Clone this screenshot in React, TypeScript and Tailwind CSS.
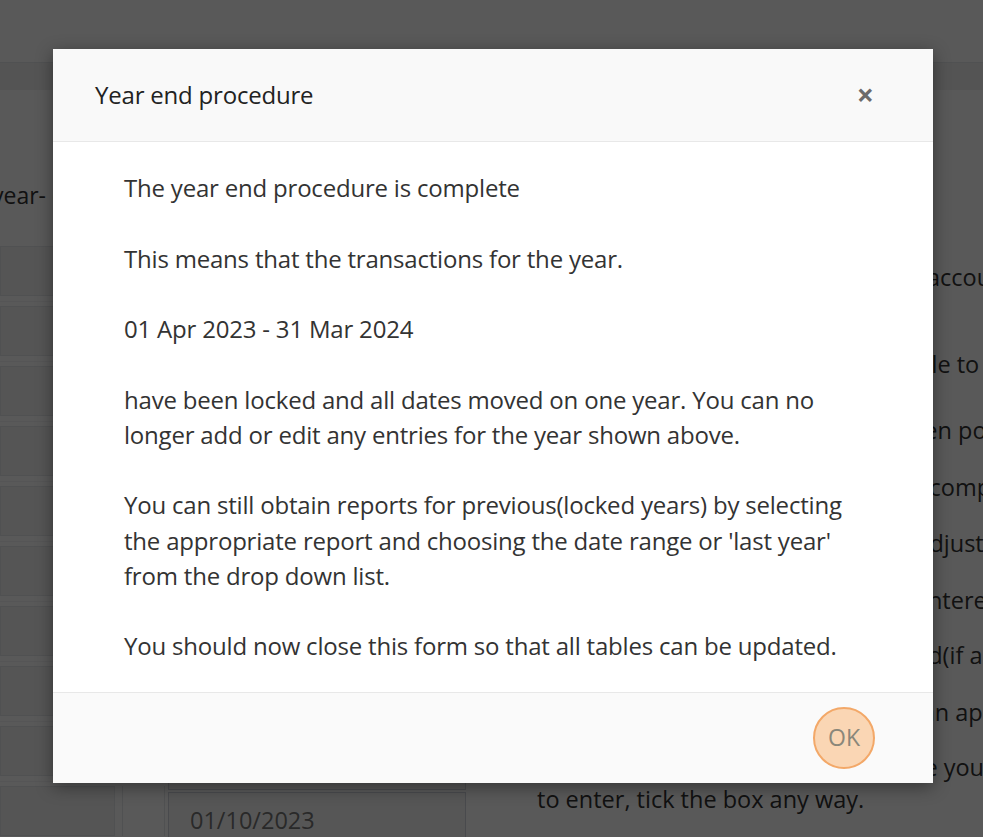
import React from "react";

const ROWS = ["01/04/2023", "01/05/2023", "01/06/2023", "01/07/2023", "01/08/2023", "01/09/2023", "01/10/2023", "01/11/2023", "01/12/2023", "01/10/2023"];

const CHECKS = [
  { text: "Run this procedure once all of your accounts are up to date", mt: "mt-[89px]" },
  { text: "Please check first that you will be able to complete every step", mt: "mt-[55px]" },
  { text: "All the bank accounts must have been posted and reconciled", mt: "mt-[34px]" },
  { text: "Ensure that any sales invoices were complete and sent", mt: "mt-[25px]" },
  { text: "Make sure the VAT return and any adjustments are entered", mt: "mt-[24px]" },
  { text: "All depreciation figures have been entered for the year", mt: "mt-[25px]" },
  { text: "Closing stock value has been entered(if any)", mt: "mt-[23px]" },
  { text: "Any dividend should be entered as an appropriate journal", mt: "mt-[25px]" },
];

function BackgroundPage() {
  return (
    <div className="h-[837px] bg-white text-[#333] font-['Open_Sans',sans-serif]">
      <div className="h-[63px] border-b border-gray-200 bg-white" />
      <div className="h-[27px] bg-[#f0f0f0]" />
      <div className="flex">
        {/* left form */}
        <div className="w-[520px] shrink-0 pt-[89px]">
          <div className="-ml-[8px] whitespace-nowrap text-[23px] leading-[32px]">year- end date</div>
          <div className="mt-[31px] flex flex-col">
            {ROWS.map((d, i) => (
              <div key={i} className="flex h-[60px] items-start border-b border-gray-100">
                <div className="mt-[4px] h-[50px] w-[115px] shrink-0 border border-gray-200 bg-[#f2f2f2]" />
                <div className="ml-[7px] mt-[4px] h-[50px] w-[43px] shrink-0 border-x border-gray-200" />
                <div className="ml-[3px] mt-[10px] flex h-[58px] w-[298px] shrink-0 items-center border border-gray-300 bg-[#f7f7f7] px-[21px] text-[23.5px] text-[#777]">
                  {d}
                </div>
              </div>
            ))}
          </div>
        </div>
        {/* right checklist */}
        <div className="flex-1 whitespace-nowrap pl-[17px] pt-[40px] text-[23.5px] leading-[32px]">
          <div className="flex gap-8">
            <div className="pb-[6px] text-gray-500">Checklist</div>
            <div className="w-[240px] border-b-4 border-[#dcc572] pb-[6px]">Before you start</div>
          </div>
          {CHECKS.map((c, i) => (
            <div key={i} className={c.mt}>{c.text}</div>
          ))}
          <div className="mt-[23px]">If any of these do not apply, because you have nothing</div>
          <div>to enter, tick the box any way.</div>
        </div>
      </div>
    </div>
  );
}

export default function App() {
  return (
    <div className="relative h-[837px] w-full overflow-hidden">
      <BackgroundPage />
      <div className="absolute inset-0 bg-black/65" />

      {/* modal */}
      <div className="absolute left-[53px] top-[49px] w-[880px] bg-white font-['Open_Sans',sans-serif] shadow-[0_4px_16px_rgba(0,0,0,0.4)]">
        <div className="flex h-[93px] items-center justify-between border-b border-[#e8e8e8] bg-[#f9f9f9] pl-[42px] pr-[59px]">
          <h2 className="text-[24px] leading-none tracking-[-0.2px] text-[#222]">Year end procedure</h2>
          <button className="text-[30px] font-bold leading-none text-[#6b6b6b]">×</button>
        </div>

        <div className="pb-[28px] pl-[71px] pr-[30px] pt-[28px] text-[24px] leading-[35.25px] tracking-[-0.2px] text-[#333]">
          <p>The year end procedure is complete</p>
          <p className="mt-[35.25px]">This means that the transactions for the year.</p>
          <p className="mt-[35.25px]">01 Apr 2023 - 31 Mar 2024</p>
          <p className="mt-[35.25px]">
            have been locked and all dates moved on one year. You can no
            <br />
            longer add or edit any entries for the year shown above.
          </p>
          <p className="mt-[35.25px]">
            You can still obtain reports for previous(locked years) by selecting
            <br />
            the appropriate report and choosing the date range or 'last year'
            <br />
            from the drop down list.
          </p>
          <p className="mt-[35.25px]">You should now close this form so that all tables can be updated.</p>
        </div>

        <div className="flex h-[91px] items-center justify-end border-t border-[#e8e8e8] bg-[#fafafa] pr-[58px]">
          <button className="flex h-[62px] w-[62px] items-center justify-center rounded-full border-2 border-[#f3a868] bg-[#fad6b4] text-[23px] text-[#8a877a]">
            OK
          </button>
        </div>
      </div>
    </div>
  );
}
